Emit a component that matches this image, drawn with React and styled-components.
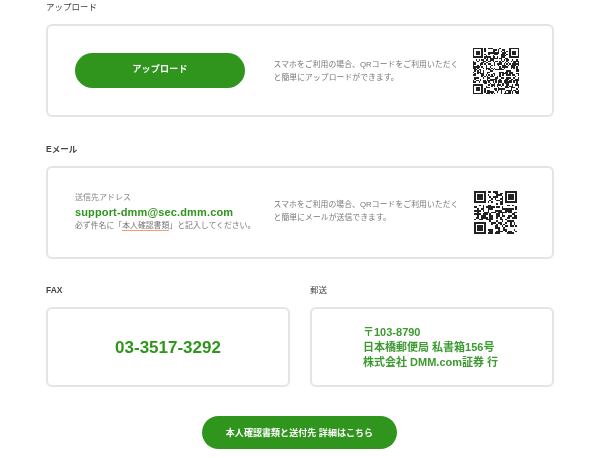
import React from "react";
import styled, { createGlobalStyle } from "styled-components";

const GlobalStyle = createGlobalStyle`
  html, body {
    margin: 0;
    padding: 0;
    background: #fff;
  }
  body {
    font-family: "Liberation Sans", "Noto Sans CJK JP", sans-serif;
  }
`;

const Page = styled.div`
  width: 600px;
  height: 458px;
  overflow: hidden;
  box-sizing: border-box;
  padding: 0 46px;
  filter: blur(0.6px);
`;

const Section = styled.section`
  margin-bottom: ${(props) => props.$gap || 0}px;
`;

const Label = styled.h3`
  margin: 0 0 11px 0;
  height: 13px;
  font-size: 8.5px;
  line-height: 15px;
  font-weight: ${(props) => (props.$bold ? 700 : 400)};
  color: #444;
`;

const Card = styled.div`
  box-sizing: border-box;
  height: ${(props) => props.$height}px;
  border: 2px solid #e4e4e4;
  border-radius: 6px;
  background: #fff;
`;

const SplitCard = styled(Card)`
  display: flex;
  align-items: center;
  padding-left: 27px;
`;

const Left = styled.div`
  width: 198.5px;
  flex: none;
  margin-bottom: ${(props) => props.$lift || 0}px;
`;

const PillButton = styled.a`
  display: flex;
  align-items: center;
  justify-content: center;
  box-sizing: border-box;
  width: ${(props) => props.$width}px;
  height: ${(props) => props.$height}px;
  padding-bottom: ${(props) => props.$lift || 0}px;
  border-radius: 18px;
  background: #2f951d;
  color: #fff;
  font-size: 9px;
  font-weight: 700;
  letter-spacing: ${(props) => (props.$tight ? "0.05px" : "0.2px")};
`;

const Note = styled.p`
  flex: none;
  width: 187px;
  margin: 0 0 ${(props) => props.$lift || 0}px;
  font-size: 7.8px;
  line-height: 13px;
  color: #777;
  letter-spacing: 0.08px;
`;

const Qr = styled.svg`
  display: block;
  flex: none;
  margin-left: ${(props) => props.$offset}px;
`;

const AddressLabel = styled.div`
  font-size: 8px;
  line-height: 12px;
  color: #888;
`;

const Email = styled.div`
  font-size: 11px;
  line-height: 17px;
  font-weight: 700;
  color: #2f951d;
  letter-spacing: 0.14px;
`;

const Hint = styled.div`
  font-size: 7.87px;
  line-height: 10px;
  color: #777;
  white-space: nowrap;
`;

const Marked = styled.span`
  border-bottom: 1px solid #f0a070;
`;

const Columns = styled.div`
  display: grid;
  grid-template-columns: 244px 244px;
  gap: 20px;
`;

const NumberCard = styled(Card)`
  display: flex;
  align-items: center;
  justify-content: center;
  padding-top: 2px;
  font-size: 17px;
  font-weight: 700;
  color: #2f951d;
`;

const AddressCard = styled(Card)`
  display: flex;
  align-items: center;
  padding-left: 51px;
  font-size: 11px;
  line-height: 15px;
  font-weight: 700;
  color: #3c9a30;
`;

const Footer = styled.div`
  display: flex;
  justify-content: center;
  margin-top: 29px;
  padding-right: 1px;
`;

// pseudo random modules, only has to look like a QR code at this size
function buildModules(size, seed) {
  const cells = [];
  let value = seed;
  const inFinder = (x, y) =>
    (x < 8 && y < 8) || (x >= size - 8 && y < 8) || (x < 8 && y >= size - 8);
  for (let y = 0; y < size; y++) {
    for (let x = 0; x < size; x++) {
      value = (value * 1103515245 + 12345) & 0x7fffffff;
      if (!inFinder(x, y) && (value >> 16) % 100 < 50) cells.push([x, y]);
    }
  }
  return cells;
}

const QrCode = ({ size, pixels, seed, offset }) => {
  const cells = buildModules(size, seed);
  const finders = [
    [0, 0],
    [size - 7, 0],
    [0, size - 7],
  ];
  return (
    <Qr
      $offset={offset}
      width={pixels}
      height={pixels}
      viewBox={`0 0 ${size} ${size}`}
      shapeRendering="crispEdges"
    >
      {cells.map(([x, y]) => (
        <rect key={`${x}-${y}`} x={x} y={y} width="1" height="1" fill="#222" />
      ))}
      {finders.map(([x, y]) => (
        <g key={`${x}-${y}`}>
          <rect x={x} y={y} width="7" height="7" fill="#222" />
          <rect x={x + 1} y={y + 1} width="5" height="5" fill="#fff" />
          <rect x={x + 2} y={y + 2} width="3" height="3" fill="#222" />
        </g>
      ))}
    </Qr>
  );
};

export default function App() {
  return (
    <Page>
      <GlobalStyle />
      <Section $gap={25}>
        <Label>アップロード</Label>
        <SplitCard $height={93}>
          <Left>
            <PillButton $width={170} $height={35} $lift={4}>
              アップロード
            </PillButton>
          </Left>
          <Note>
            スマホをご利用の場合、QRコードをご利用いただくと簡単にアップロードができます。
          </Note>
          <QrCode size={33} pixels={46} seed={7} offset={12.5} />
        </SplitCard>
      </Section>
      <Section $gap={24}>
        <Label $bold>Eメール</Label>
        <SplitCard $height={93}>
          <Left $lift={3}>
            <AddressLabel>送信先アドレス</AddressLabel>
            <Email>support-dmm@sec.dmm.com</Email>
            <Hint>
              必ず件名に「<Marked>本人確認書類</Marked>」と記入してください。
            </Hint>
          </Left>
          <Note $lift={4}>
            スマホをご利用の場合、QRコードをご利用いただくと簡単にメールが送信できます。
          </Note>
          <QrCode size={25} pixels={43} seed={23} offset={13.5} />
        </SplitCard>
      </Section>
      <Columns>
        <div>
          <Label $bold>FAX</Label>
          <NumberCard $height={80}>03-3517-3292</NumberCard>
        </div>
        <div>
          <Label>郵送</Label>
          <AddressCard $height={80}>
            <div>
              〒103-8790
              <br />
              日本橋郵便局 私書箱156号
              <br />
              株式会社 DMM.com証券 行
            </div>
          </AddressCard>
        </div>
      </Columns>
      <Footer>
        <PillButton $width={195} $height={33} $tight>
          本人確認書類と送付先 詳細はこちら
        </PillButton>
      </Footer>
    </Page>
  );
}
